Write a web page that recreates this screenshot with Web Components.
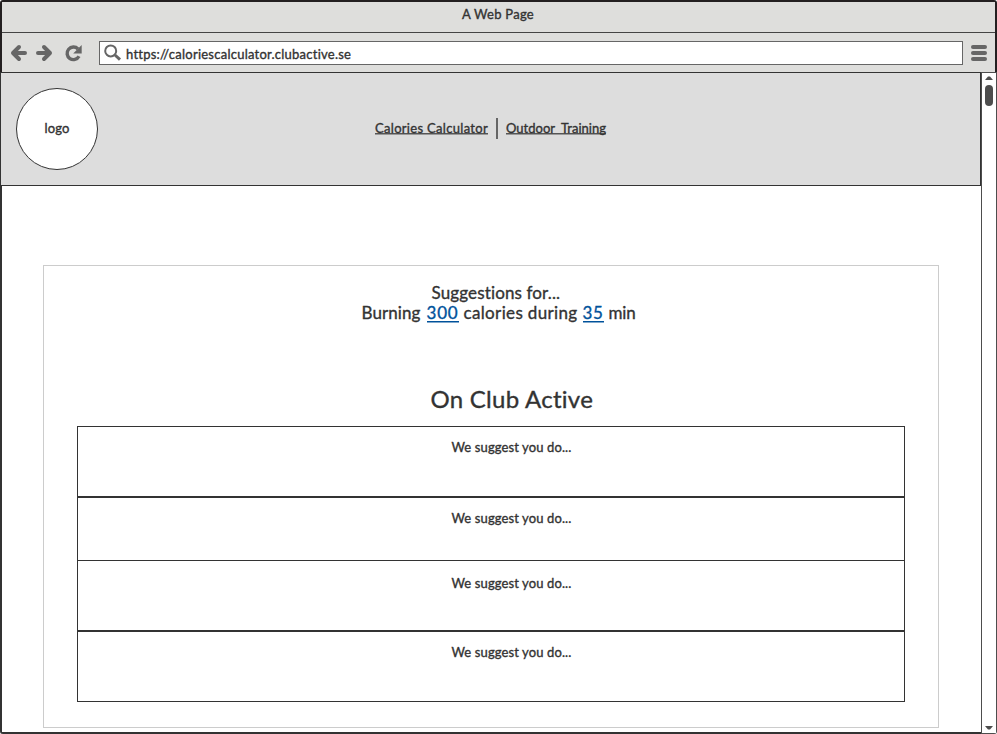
<!DOCTYPE html>
<html lang="en">
<head>
<meta charset="utf-8">
<title>A Web Page</title>
<style>
html,body{margin:0;height:100%;overflow:hidden}
body{font-family:Lato,"Open Sans",sans-serif;font-weight:400;color:#333;background:#fff}
</style>
</head>
<body>
<browser-window>
  <fit-text slot="title" width="72" size="13">A Web Page</fit-text>
  <fit-text slot="address" width="225" size="13">https://caloriescalculator.clubactive.se</fit-text>
  <site-header></site-header>
  <suggestion-panel>
    <suggestion-item style="height:71px">We suggest you do...</suggestion-item>
    <suggestion-item style="height:64px">We suggest you do...</suggestion-item>
    <suggestion-item joined style="height:70px">We suggest you do...</suggestion-item>
    <suggestion-item style="height:71px">We suggest you do...</suggestion-item>
  </suggestion-panel>
</browser-window>
<script>
const define = (name, html, setup) => customElements.define(name, class extends HTMLElement {
  constructor() {
    super();
    this.attachShadow({mode: 'open'}).innerHTML = html;
  }
  connectedCallback() { if (setup) setup(this); }
});

/* One line of text whose letter spacing is tuned to fill a given width. */
define('fit-text', `<style>
:host{display:inline-block;white-space:pre;line-height:20px;-webkit-text-stroke:.35px currentColor}
span{display:inline-block}
</style><span><slot></slot></span>`, el => {
  const span = el.shadowRoot.querySelector('span');
  const width = Number(el.getAttribute('width'));
  el.style.fontSize = el.getAttribute('size') + 'px';
  el.style.width = width + 'px';
  const natural = span.getBoundingClientRect().width;
  span.style.letterSpacing = (width - natural) / el.textContent.length + 'px';
});

define('nav-icons', `<style>
:host{display:block;width:97px;height:39px}svg{display:block}
</style><svg width="97" height="39" fill="none" stroke="#666" stroke-width="4">
<path d="M23 20H11M17 14L11 20l6 6" stroke-linecap="round" stroke-linejoin="round"/>
<path d="M36 20h12M42 14L48 20l-6 6" stroke-linecap="round" stroke-linejoin="round"/>
<path d="M76 16A6.300 6.300 0 1 0 77 23.300" stroke-width="3.400"/>
<path d="M79.700 12v8.500h-8.500z" fill="#666" stroke="none"/></svg>`);

define('menu-icon', `<style>
:host{display:grid;gap:2px;width:16px;height:16px}i{height:4px;border-radius:2px;background:#666}
</style><i></i><i></i><i></i>`);

define('scroll-bar', `<style>
:host{display:flex;flex-direction:column;align-items:center;box-sizing:border-box;width:16px;border:1px solid #4d4d4d;background:#fff}
svg{display:block;margin-top:3px}
i{width:8px;height:21px;border-radius:4px;background:#4d4d4d;margin-top:5px}
.down{margin:auto 0 3px}
</style><svg width="8" height="4" fill="#4d4d4d"><path d="M0 4L3 .5h2L8 4z"/></svg><i></i>
<svg class="down" width="8" height="4" fill="#4d4d4d"><path d="M0 0h8L5 3.500H3z"/></svg>`);

define('browser-window', `<style>
:host{display:grid;grid-template-rows:33px 40px 1fr;height:734px;width:997px;background:#231f20;border-radius:3px;overflow:hidden}
.title,.bar{margin:0 2px;background:#dededc}
.title{margin-top:2px;border-bottom:1px solid #444;display:flex;justify-content:center;padding:2px 1px 0 0;box-sizing:border-box}
.bar{border-bottom:1px solid #333;display:flex;box-sizing:border-box}
.field{margin-top:8px;width:864px;height:24px;box-sizing:border-box;border:1px solid #666;background:#fff;display:flex}
.field svg{margin:2px 4px 0 4px;flex:none}
.field ::slotted(*){margin-top:2px}
menu-icon{margin:12px 0 0 8px}
.view{display:grid;grid-template-columns:981px 16px;margin-top:-1px;min-height:0;background:#fff}
.page{box-sizing:border-box;height:662px;border-bottom:2px solid #333;box-shadow:inset 2px 0 #333;overflow:hidden}
</style>
<div class="title"><slot name="title"></slot></div>
<div class="bar"><nav-icons></nav-icons><div class="field">
<svg width="18" height="18" fill="none" stroke="#666"><circle cx="6.700" cy="6.900" r="5.500" stroke-width="2"/><path d="M11 11l5 4.700" stroke-width="3"/></svg>
<slot name="address"></slot></div><menu-icon></menu-icon></div>
<div class="view"><div class="page"><slot></slot></div><scroll-bar></scroll-bar></div>`);

define('site-header', `<style>
:host{display:grid;grid-template-columns:1fr auto 1fr;height:114px;box-sizing:border-box;border:1px solid #333;background:#ddd;padding:15px}
.logo{width:80px;height:80px;border:1px solid #333;border-radius:50%;background:#fff;display:grid;place-content:center;box-sizing:content-box}
.logo fit-text{margin-top:-2px}
nav{display:flex;margin-top:30px}
.link{height:20px;background:linear-gradient(#555,#555) 0 15px/100% 1.500px no-repeat}
hr{border:0;width:2px;height:21px;background:#666;margin:0 8px}
</style><div><div class="logo"><fit-text width="25" size="13">logo</fit-text></div></div>
<nav><fit-text class="link" width="113" size="13">Calories Calculator</fit-text><hr><fit-text class="link" width="100" size="13">Outdoor  Training</fit-text></nav>`);

define('suggestion-panel', `<style>
:host{display:block;box-sizing:border-box;width:896px;height:463px;margin:79px 0 0 43px;border:1px solid #ccc;padding:17px 33px 0}
.row{display:flex;justify-content:center;gap:5px}
.intro{padding-left:10px}.two{padding-left:15px}
.amount{height:20px;color:#00529b;background:linear-gradient(#00529b,#00529b) 0 18px/100% 1.500px no-repeat}
.two .amount:nth-child(2){margin-left:1px}
.head{margin:61px 0 12px;padding-left:42px;height:30px}
.head fit-text{line-height:30px}
</style>
<div class="row intro"><fit-text width="129" size="17">Suggestions for...</fit-text></div>
<div class="row two"><fit-text width="59" size="17">Burning</fit-text><fit-text class="amount" width="32" size="17">300</fit-text><fit-text width="114" size="17">calories during</fit-text><fit-text class="amount" width="21" size="17">35</fit-text><fit-text width="27" size="17">min</fit-text></div>
<div class="row head"><fit-text width="163" size="24">On Club Active</fit-text></div>
<slot></slot>`);

define('suggestion-item', `<style>
:host{display:flex;justify-content:center;align-items:flex-start;box-sizing:border-box;border:1px solid #333;padding:10px 0 0 41px}
:host([joined]){border-top:0}
:host([joined]) fit-text{margin-top:2px}
</style>`, el => {
  const line = document.createElement('fit-text');
  line.setAttribute('width', '120');
  line.setAttribute('size', '13');
  line.textContent = el.textContent;
  el.shadowRoot.append(line);
});
</script>
</body>
</html>
